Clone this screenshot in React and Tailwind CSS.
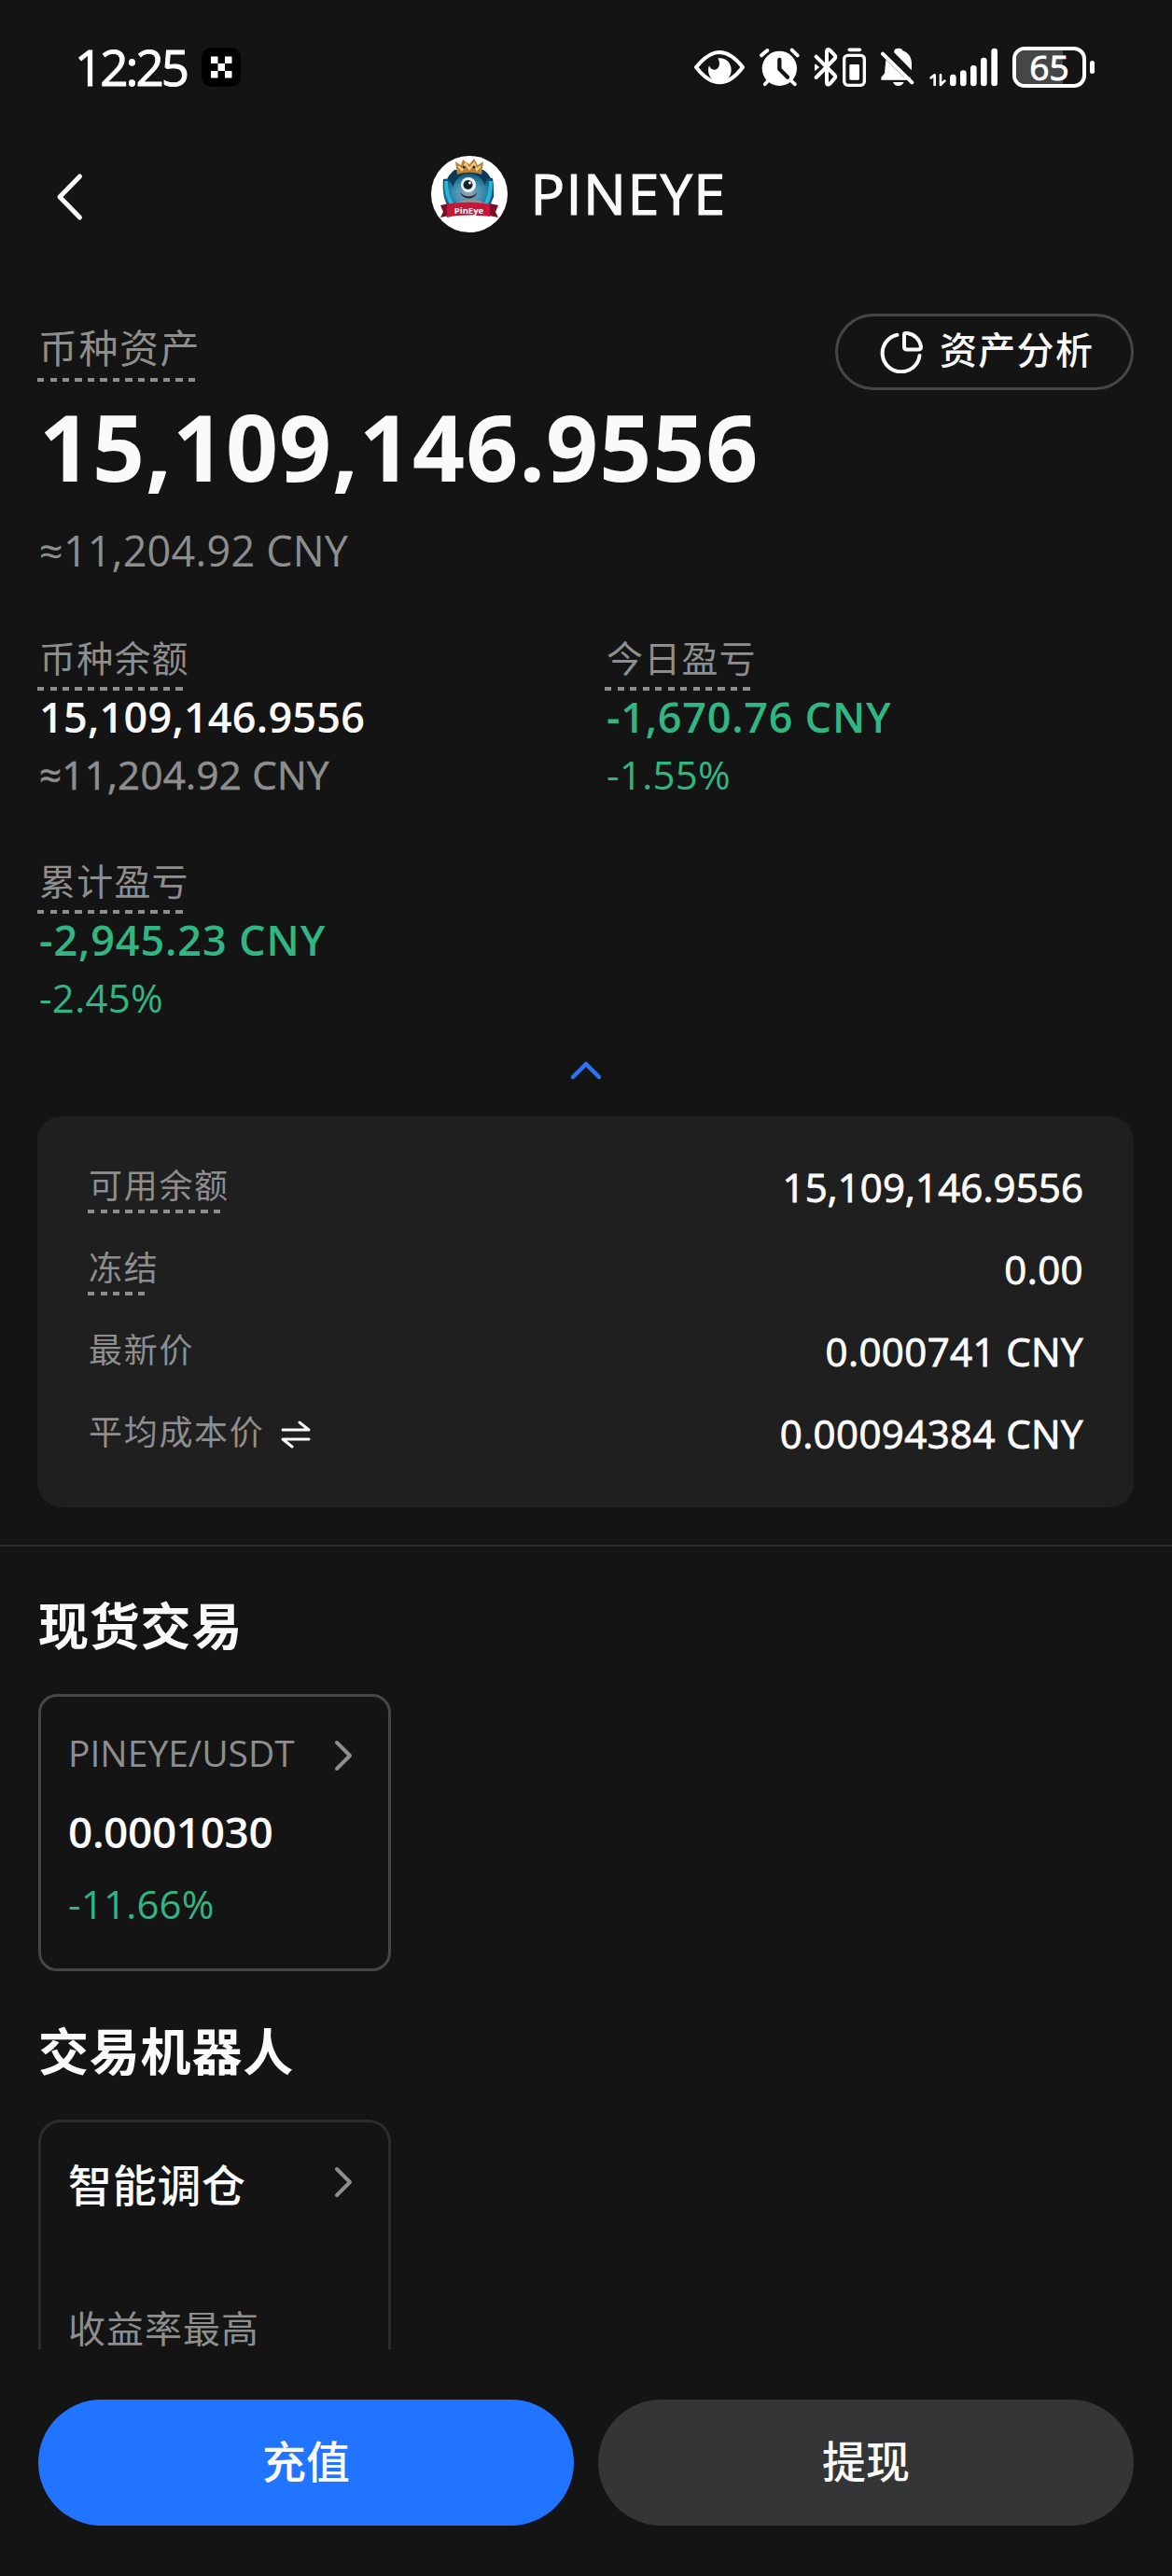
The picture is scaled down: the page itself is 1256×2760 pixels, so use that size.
const FONT = "font-['Open_Sans','Noto_Sans_CJK_SC',sans-serif]";

const EyeIcon = () => (
  <svg className="h-[44px] w-[55px]" viewBox="42 60 165 132" fill="none">
    <path d="M48 126C76 92 98 78 123 78s48 14 75 48c-27 36-50 49-75 49s-47-13-75-49z" stroke="#fff" strokeWidth="12" strokeLinejoin="round" />
    <path d="M118 97c25-3 43 14 43 38 0 22-17 38-37 38s-37-15-37-37c0-6 1-11 3-15 4 10 12 15 20 13 13-3 17-20 8-37z" fill="#fff" />
  </svg>
);

const AlarmIcon = () => (
  <svg className="ml-[14px] h-[44px] w-[45px]" viewBox="249 60 135 132" fill="none" stroke="#fff" strokeLinecap="round">
    <circle cx="316" cy="130" r="56" fill="#fff" stroke="none" />
    <path d="M258 88l19-16M356 71l18 17" strokeWidth="12" />
    <path d="M279 170l-10 11M354 170l12 11" strokeWidth="11" />
    <path d="M316 102v30l26 26" stroke="#141414" strokeWidth="13" strokeLinejoin="round" />
  </svg>
);

const BluetoothIcon = () => (
  <svg className="ml-[14px] h-[44px] w-[26px]" viewBox="426 60 78 132" fill="none" stroke="#fff" strokeLinecap="round" strokeLinejoin="round">
    <path d="M434 92l58 58c5 5 5 9 0 13l-13 15c-6 6-11 5-11-4V78c0-10 6-11 12-5l13 14c4 4 4 8 0 12l-59 60" strokeWidth="12" />
    <path d="M431 118l11 8-11 9z" fill="#fff" strokeWidth="4" />
  </svg>
);

const DeviceBatteryIcon = () => (
  <svg className="ml-[5px] h-[44px] w-[25px]" viewBox="519 60 75 132" fill="none">
    <path d="M541 70h33" stroke="#fff" strokeWidth="11" strokeLinecap="round" />
    <rect x="524" y="88" width="65" height="96" rx="12" stroke="#fff" strokeWidth="10" />
    <rect x="541" y="117" width="32" height="50" rx="4" fill="#fff" />
  </svg>
);

const MutedBellIcon = () => (
  <svg className="ml-[16px] h-[44px] w-[36px]" viewBox="642 60 108 132" fill="none">
    <path d="M684 78l3-10c8-4 17-4 23 0l1 4c20 6 30 23 30 42v22z" fill="#fff" />
    <path d="M658 102l58 56h21v9h-94v-9l11-12z" fill="#fff" />
    <path d="M648 83l94 92" stroke="#fff" strokeWidth="12" strokeLinecap="round" />
    <path d="M681 174h35c-4 8-10 12-18 12s-14-4-17-12z" fill="#fff" />
  </svg>
);

const SignalIcon = () => (
  <svg className="ml-[16px] h-[44px] w-[74px]" viewBox="798 60 222 132" fill="none" stroke="#fff" strokeLinecap="round" strokeLinejoin="round">
    <path d="M803 160l12-9v32M834 151v32l13-13" strokeWidth="8" />
    <path d="M874 159v18M907 146v31M940 130v47M973 105v72M1007 75v102" strokeWidth="20" />
  </svg>
);

const Battery = ({ level }) => (
  <div className="ml-[15px] flex items-center gap-[4px]">
    <div className="relative flex h-[44px] w-[79px] items-center justify-center rounded-[13px] border-4 border-white">
      <div className="absolute inset-y-0 left-0 rounded-l-[9px] bg-[#464646]" style={{ width: '71%' }} />
      <span className="relative text-[37px] leading-[36px] [-webkit-text-stroke:1px_#fff]">{level}</span>
    </div>
    <div className="h-[14px] w-[5px] rounded-full bg-white" />
  </div>
);

const StatusBar = () => (
  <div className="flex h-[144px] items-center justify-between pr-[83px] pl-[80px] text-white">
    <div className="flex items-center">
      <span className="w-[136px] text-[53px] leading-[62px] tracking-[-3px] [-webkit-text-stroke:1px_#fff]">12:25</span>
      <svg className="h-[42px] w-[42px]" viewBox="0 0 42 42">
        <rect width="42" height="42" rx="10" fill="#000" />
        <path d="M10 9.500h7.500v7.500H10zM25 9.500h7.500v7.500H25zM17.500 17H25v8h-7.500zM10 25h7.500v7.500H10zM25 25h7.500v7.500H25z" fill="#fff" />
      </svg>
    </div>
    <div className="flex items-center">
      <EyeIcon />
      <AlarmIcon />
      <BluetoothIcon />
      <DeviceBatteryIcon />
      <MutedBellIcon />
      <SignalIcon />
      <Battery level={65} />
    </div>
  </div>
);

const CoinLogo = () => (
  <svg className="h-[82px] w-[82px]" viewBox="0 0 82 82">
    <defs>
      <radialGradient id="body" cx="0.5" cy="0.55" r="0.6">
        <stop offset="0" stopColor="#8fa9b5" />
        <stop offset="0.5" stopColor="#3a8fb0" />
        <stop offset="1" stopColor="#064a6b" />
      </radialGradient>
    </defs>
    <circle cx="41" cy="41" r="41" fill="#fff" />
    <path d="M25 15c-9 7-12 18-11 29l6 14h41l6-14c1-13-2-23-11-29z" fill="#0a3c58" />
    <path d="M13 25c5-2 9 2 10 9 3-9 9-15 18-15s14 5 17 13c0-6 4-9 8-8 2 10 1 23-6 33H20c-7-9-8-21-7-32z" fill="url(#body)" />
    <path d="M16 27c0 12 3 21 8 27M64 27c0 12-2 20-7 27" fill="none" stroke="#27b5dc" strokeWidth="4" />
    <path d="M25 52c4-6 27-7 32-1l-3 8H28z" fill="#8d9299" />
    <path d="M26 6l6 4 2-6 7 5 5-6 4 7 6-4-2 14c-8-3-18-3-26 0z" fill="#b98237" />
    <path d="M29 11l4 4 4-7 4 6 5-6 3 7 4-4" fill="none" stroke="#f0cf85" strokeWidth="2" />
    <circle cx="35" cy="12" r="1.500" fill="#2b1d17" />
    <circle cx="46" cy="12" r="1.500" fill="#2b1d17" />
    <circle cx="40" cy="31" r="8" fill="#f1f4f5" />
    <circle cx="39.500" cy="31" r="5" fill="#15232e" />
    <circle cx="41.500" cy="29" r="1.400" fill="#fff" />
    <path d="M31 39c5 6 14 6 18 0-1 8-15 9-18 0z" fill="#3b1520" />
    <path d="M10 53l9-2 1 13-10 2 3-6zM72 53l-9-2-1 13 10 2-3-6z" fill="#7d1026" />
    <path d="M17 52c13-3 33-3 46 0v13c-13-2-33-2-46 1z" fill="#c5173a" />
    <text x="40.500" y="62" fill="#fff" fontSize="9.500" fontWeight="700" textAnchor="middle">PinEye</text>
  </svg>
);

const Header = () => (
  <div className="relative flex h-[128px] items-center justify-center gap-[25px] pr-[16px]">
    <svg className="absolute top-[41px] left-[59px] h-[52px] w-[32px]" viewBox="0 0 32 52" fill="none" stroke="#fafafa" strokeWidth="5" strokeLinecap="round" strokeLinejoin="round">
      <path d="M26.500 4L5 26l21.500 22" />
    </svg>
    <CoinLogo />
    <h1 className="mb-[3px] text-[61px] leading-[80px] tracking-[1.4px] [-webkit-text-stroke:1.2px_#fafafa]">PINEYE</h1>
  </div>
);

const Dashes = ({ className }) => (
  <div className={`h-[4px] bg-[repeating-linear-gradient(90deg,#8e8e8e_0_7px,transparent_7px_13.5px)] ${className}`} />
);

const Stat = ({ label, value, valueClass, sub, subClass }) => (
  <div className="flex flex-col items-start">
    <div className="pl-[2px] text-[39px] leading-[54px] tracking-[1.2px] text-[#8e8e8e]">{label}</div>
    <Dashes className="mt-[4px] w-[156px]" />
    <div className={`mt-[3px] pl-[2px] text-[45px] leading-[50px] font-semibold ${valueClass}`}>{value}</div>
    <div className={`mt-[12px] pl-[2px] text-[42px] leading-[50px] tracking-[0.3px] ${subClass}`}>{sub}</div>
  </div>
);

const DetailRow = ({ label, value, valueClass = 'tracking-[0.4px]', dashClass, swap }) => (
  <div className="flex h-[88px] items-start justify-between pt-[20px]">
    <div>
      <div className="flex items-center pl-[1px] text-[36px] leading-[46px] tracking-[1.7px] text-[#8e8e8e]">
        {label}
        {swap && (
          <svg className="mt-[4px] ml-[17px] h-[30px] w-[32px]" viewBox="0 0 32 30" fill="none" stroke="#fafafa" strokeWidth="3" strokeLinecap="round" strokeLinejoin="round">
            <path d="M2 10h28L20 2M30 20H2l10 8" />
          </svg>
        )}
      </div>
      {dashClass && <Dashes className={`mt-[2px] ${dashClass}`} />}
    </div>
    <div className={`mt-[2px] text-[42px] leading-[44px] text-[#fafafa] [-webkit-text-stroke:0.9px_#fafafa] ${valueClass}`}>{value}</div>
  </div>
);

const ChevronRight = ({ className }) => (
  <svg className={`h-[36px] w-[22px] ${className}`} viewBox="0 0 22 36" fill="none" stroke="#8e8e8e" strokeWidth="4" strokeLinecap="round" strokeLinejoin="round">
    <path d="M4 4l14 14L4 32" />
  </svg>
);

export default function App() {
  return (
    <div className={`h-[2760px] w-[1256px] overflow-hidden bg-[#141414] whitespace-nowrap text-[#fafafa] ${FONT}`}>
      <StatusBar />
      <Header />

      <section className="px-[40px] pt-[64px]">
        <div className="flex h-[81px] items-start justify-between">
          <div className="pt-[7px]">
            <div className="pl-[1px] text-[42px] leading-[60px] tracking-[1.5px] text-[#8e8e8e]">币种资产</div>
            <Dashes className="mt-[2px] w-[170px]" />
          </div>
          <button className="mr-[1px] flex h-[82px] w-[320px] items-center rounded-full border-[3px] border-[#464646] pl-[45px]">
            <svg className="h-[46px] w-[46px]" viewBox="0 0 46 46" fill="none" stroke="#fafafa" strokeWidth="4" strokeLinecap="round" strokeLinejoin="round">
              <path d="M18.500 4.800A20 20 0 1 0 42.500 27" />
              <path d="M27.500 3h2A17 17 0 0 1 44 17.500c0 2-1 3-3 3H29c-2 0-3-1-3-3V4.500c0-1 .5-1.500 1.500-1.500z" />
            </svg>
            <span className="mb-[4px] ml-[18px] text-[40px] leading-[50px] font-medium tracking-[1.3px]">资产分析</span>
          </button>
        </div>

        <div className="mt-[6px] pl-[2px] text-[98px] leading-[110px] font-bold tracking-[1px]">15,109,146.9556</div>
        <div className="mt-[27px] pl-[2px] text-[45px] leading-[60px] tracking-[0.2px] text-[#8e8e8e]">≈11,204.92 CNY</div>

        <div className="mt-[58px] grid grid-cols-[608px_1fr] gap-y-[62px]">
          <Stat label="币种余额" value="15,109,146.9556" valueClass="tracking-[0.25px]" sub="≈11,204.92 CNY" subClass="text-[#8e8e8e] [-webkit-text-stroke:0.6px_#8e8e8e]" />
          <Stat label="今日盈亏" value="-1,670.76 CNY" valueClass="text-[#31b582] tracking-[0.75px]" sub="-1.55%" subClass="text-[#31b582]" />
          <Stat label="累计盈亏" value="-2,945.23 CNY" valueClass="text-[#31b582] tracking-[0.9px]" sub="-2.45%" subClass="text-[#31b582]" />
        </div>

        <svg className="mx-auto mt-[42px] h-[22px] w-[36px]" viewBox="0 0 36 22" fill="none" stroke="#2b74f5" strokeWidth="4.500" strokeLinecap="round" strokeLinejoin="round">
          <path d="M4 18L18 4l14 14" />
        </svg>

        <div className="mt-[38px] mr-[1px] h-[419px] rounded-[26px] bg-[#1f1f1f] px-[54px] pt-[32px]">
          <DetailRow label="可用余额" value="15,109,146.9556" valueClass="tracking-[0.1px]" dashClass="w-[143px]" />
          <DetailRow label="冻结" value="0.00" dashClass="w-[62px]" />
          <DetailRow label="最新价" value="0.000741 CNY" />
          <DetailRow label="平均成本价" value="0.00094384 CNY" swap />
        </div>
      </section>

      <div className="mt-[40px] h-[2px] bg-[#2b2b2b]" />

      <section className="px-[41px] pt-[50px]">
        <h2 className="text-[54px] leading-[70px] font-bold tracking-[0.8px]">现货交易</h2>
        <div className="mt-[38px] h-[297px] w-[378px] rounded-[20px] border-[3px] border-[#464646] px-[29px] pt-[35px]">
          <div className="flex h-[50px] items-center justify-between pr-[8px]">
            <span className="text-[39px] leading-[50px] text-[#8e8e8e]">PINEYE/USDT</span>
            <ChevronRight className="mt-[6px]" />
          </div>
          <div className="mt-[34px] text-[46px] leading-[50px] font-semibold tracking-[-0.4px]">0.0001030</div>
          <div className="mt-[27px] text-[42px] leading-[52px] tracking-[0.2px] text-[#31b582]">-11.66%</div>
        </div>

        <h2 className="mt-[51px] text-[54px] leading-[70px] font-bold tracking-[0.8px]">交易机器人</h2>
        <div className="mt-[38px] h-[246px] w-[378px] rounded-t-[24px] border-[3px] border-b-0 border-[#2c2c2c] px-[29px] pt-[37px]">
          <div className="flex h-[60px] items-center justify-between pr-[8px]">
            <span className="text-[47px] leading-[60px] font-medium tracking-[0.7px]">智能调仓</span>
            <ChevronRight className="mb-[7px]" />
          </div>
          <div className="mt-[102px] text-[40px] leading-[44px] tracking-[1px] text-[#8e8e8e]">收益率最高</div>
        </div>
      </section>

      <div className="mt-[54px] flex gap-[26px] px-[41px]">
        <button className="h-[135px] flex-1 rounded-full bg-[#2174ff] pb-[3px] text-[47px] leading-[60px] font-medium">充值</button>
        <button className="h-[135px] flex-1 rounded-full bg-[#343536] pb-[3px] text-[47px] leading-[60px] font-medium">提现</button>
      </div>
    </div>
  );
}
